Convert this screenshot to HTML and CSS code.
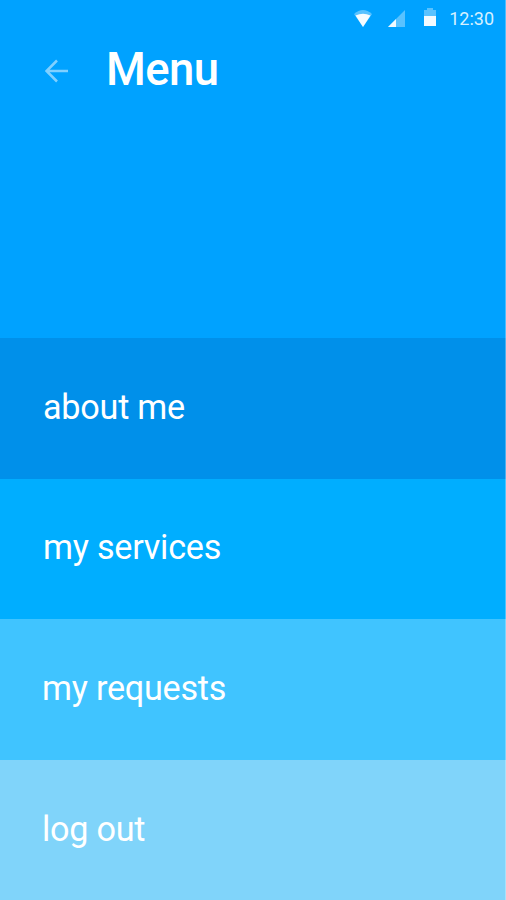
FILE: index.html
```html
<!DOCTYPE html>
<html lang="en">
<head>
    <meta charset="UTF-8">
    <meta name="viewport" content="width=device-width, initial-scale=1.0">
    <title>Menu</title>
    <link rel="stylesheet" href="styles.css">
</head>
<body>
    <header class="header">
        <div class="status-bar">
            <svg class="wifi" width="18" height="17" viewBox="0 0 18 17">
                <path d="M0 4Q9 -4 18 4L9 17Z" fill="#fff" opacity="0.35"/>
                <path d="M1.5 5.5Q9 2 16.5 5.5L9 17Z" fill="#fff" opacity="0.95"/>
            </svg>
            <svg class="signal" width="17" height="17" viewBox="0 0 17 17">
                <path d="M17 0V17H0Z" fill="#fff" opacity="0.35"/>
                <path d="M8 9V17H0Z" fill="#fff" opacity="0.9"/>
            </svg>
            <svg class="battery" width="12" height="18" viewBox="0 0 12 18">
                <path d="M3 0H9V2H12V8H0V2H3Z" fill="#fff" opacity="0.35"/>
                <path d="M0 8H12V18H0Z" fill="#fff" opacity="0.95"/>
            </svg>
            <span class="time">12:30</span>
        </div>
        <div class="title-row">
            <a href="#" class="back" aria-label="Back">
                <svg width="24" height="24" viewBox="0 0 24 24">
                    <path d="M23 12H2M12 1.5L1.5 12L12 22.5" fill="none" stroke="#80d0ff" stroke-width="2.5"/>
                </svg>
            </a>
            <h1>Menu</h1>
        </div>
    </header>
    <nav class="menu">
        <a href="#" class="about">about me</a>
        <a href="#" class="services">my services</a>
        <a href="#" class="requests">my requests</a>
        <a href="#" class="logout">log out</a>
    </nav>
</body>
</html>
```
FILE: styles.css
```css
* {
    margin: 0;
    padding: 0;
    box-sizing: border-box;
    font-family: Roboto, sans-serif;
}
body {
    height: 900px;
    background-color: #00a2ff;
    color: #fff;
    overflow: hidden;
}
.header {
    height: 338px;
    border-right: 1px solid rgba(255, 255, 255, 0.3);
}
.status-bar {
    display: flex;
    justify-content: flex-end;
    align-items: center;
    height: 36px;
    padding-right: 11px;
}
.wifi {
    margin-right: 16px;
}
.signal {
    margin-right: 19px;
}
.battery {
    margin-right: 13px;
    margin-bottom: 2px;
}
.time {
    font-size: 18px;
    color: #d5f0ff;
}
.title-row {
    display: flex;
    align-items: center;
    height: 68px;
    padding-left: 45px;
}
.back {
    width: 61px;
    height: 22px;
}
.title-row h1 {
    margin-top: -1px;
    font-size: 45.5px;
    font-weight: 500;
    letter-spacing: -0.6px;
}
.menu a {
    display: flex;
    align-items: center;
    height: 140.6px;
    padding: 0 0 3px 43px;
    border-right: 1px solid rgba(255, 255, 255, 0.3);
    font-size: 34.2px;
    letter-spacing: -0.25px;
    color: #fff;
    text-decoration: none;
}
.menu .about {
    background: #0090ea;
}
.menu .services {
    background: #00aeff;
}
.menu .requests {
    background: #40c4ff;
    padding-left: 42px;
}
.menu .logout {
    background: #80d4fa;
    padding-left: 42px;
}
```
